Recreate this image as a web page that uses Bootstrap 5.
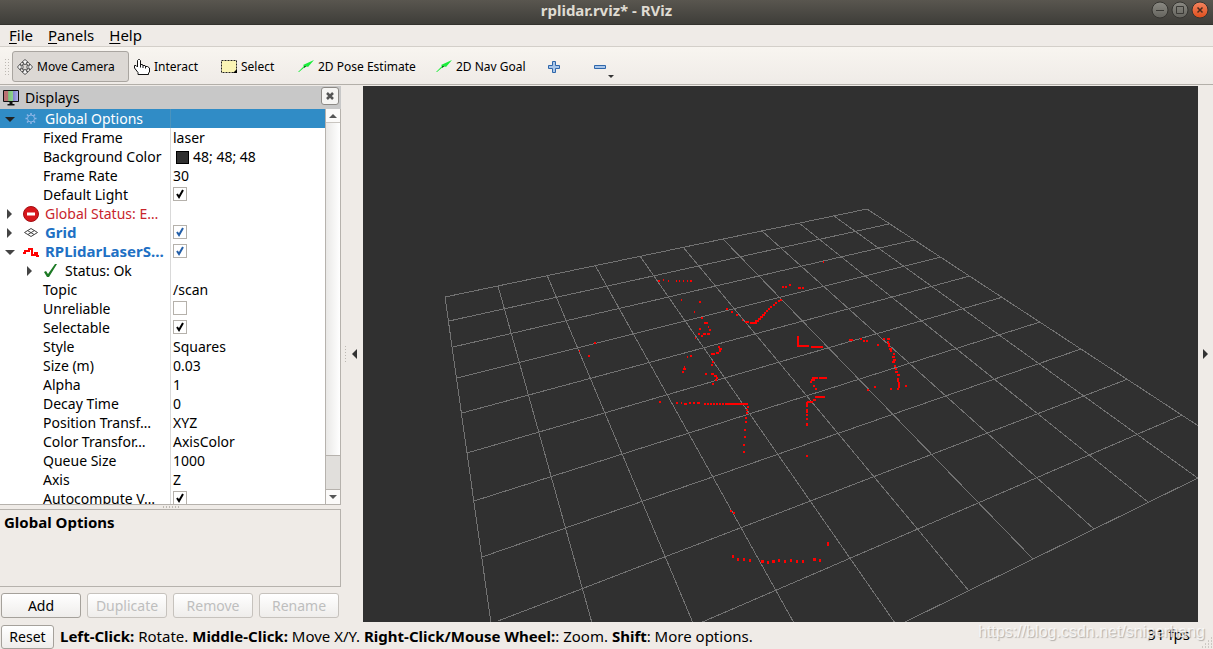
<!DOCTYPE html>
<html lang="en">
<head>
<meta charset="utf-8">
<meta name="viewport" content="width=device-width, initial-scale=1">
<title>rplidar.rviz* - RViz</title>
<link href="https://cdn.jsdelivr.net/npm/bootstrap@5.3.0/dist/css/bootstrap.min.css" rel="stylesheet">
<style>
  body { font: 14px/19px "Noto Sans", "Open Sans", sans-serif; color: #000; background: #efebe7; }
  button, input { font: inherit; color: inherit; }
  svg { display: block; flex: none; }

  .titlebar { height: 25px; background: linear-gradient(#59564f, #3e3d39); border-bottom: 1px solid #33322e; color: #dfdbd2; display: grid; grid-template-columns: 1fr auto 1fr; align-items: center; }
  .titlebar h1 { font-size: 15px; line-height: 20px; font-weight: 700; grid-column: 2; margin-bottom: 4px; }
  .win-btns { gap: 2px; justify-self: end; padding-right: 4px; margin-bottom: 4px; }
  .win-btns button { border: 0; padding: 0; background: none; }

  .menubar { height: 22px; padding-left: 9px; gap: 15px; border-bottom: 1px solid #d3cfc9; font-size: 15px; }
  .menubar a { color: #000; text-decoration: none; line-height: 21px; }
  .menubar u { text-underline-offset: 2px; text-decoration-thickness: 1px; }

  .toolbar { height: 38px; background: linear-gradient(#f8f5f0, #efebe7); border-bottom: 1px solid #b3afa9; font-size: 12px; padding: 4px 0 2px 4px; }
  .grip-v { width: 5px; height: 17px; margin-right: 3px; background: radial-gradient(circle, #bdb9b3 1px, transparent 1px) 0 0 / 3px 3px; }
  .tool { border: 1px solid transparent; border-radius: 3px; background: none; height: 31px; padding: 0 4px; gap: 4px; text-align: left; white-space: nowrap; }
  .tool.active { background: #dcd8d4; border-color: #a9a5a0; }
  .w-move { width: 117px; } .w-interact { width: 87px; } .w-select { width: 77px; }
  .w-pose { width: 138px; } .w-nav { width: 112px; } .w-plus { width: 46px; }
  .tool-split { gap: 0; }
  .minus-menu { margin: 20px 0 0 2px; }

  .dock { width: 341px; margin-top: 1px; }
  .dock-title { height: 23px; background: #c8c8c8; padding: 0 2px 0 3px; gap: 6px; }
  .dock-title h2 { font-size: 14px; line-height: 19px; font-weight: 400; }
  .dock-close { width: 18px; height: 18px; padding: 0; border: 1px solid #8d8a86; border-radius: 3px; background: #f6f5f3; margin-bottom: 3px; display: grid; place-items: center; }

  .tree-box { min-height: 0; background: #fff; border-bottom: 1px solid #b6b2ad; border-right: 1px solid #b6b2ad; }
  .tree-view { overflow: hidden; min-height: 0; }
  .props { width: 100%; table-layout: fixed; border-collapse: separate; border-spacing: 0; }
  .props td { height: 19px; line-height: 19px; padding: 0; white-space: nowrap; }
  .props td:first-child { width: 171px; border-right: 1px solid #d9d9d9; padding: 0 0 0 43px; }
  .props td:last-child { padding-left: 2px; }
  .props td.branch { padding-left: 4px; }
  .props .picked td { background: #308cc6; color: #fff; border-color: #4a93bd; }
  .node { display: flex; align-items: center; height: 19px; }
  .node.inner { padding-left: 20px; }
  .node svg:first-child { margin-right: 8px; }
  .node svg:nth-child(2) { margin-right: 5px; }
  .err { color: #c8252c; }
  .disp { color: #2070c4; font-weight: 700; font-size: 15px; }
  .tick { appearance: none; display: block; width: 14px; height: 14px; margin: 0 0 1px; border: 1px solid #b5b1ab; background: #fff; }
  .tick:checked { background: #fff url("data:image/svg+xml,%3Csvg xmlns='http://www.w3.org/2000/svg' viewBox='0 0 12 12'%3E%3Cpath d='M3 6l2 3 4-7' fill='none' stroke='%23000' stroke-width='2'/%3E%3C/svg%3E"); }
  .tick.blue:checked { background-image: url("data:image/svg+xml,%3Csvg xmlns='http://www.w3.org/2000/svg' viewBox='0 0 12 12'%3E%3Cpath d='M3 6l2 3 4-7' fill='none' stroke='%23245fa8' stroke-width='2'/%3E%3C/svg%3E"); }
  .swatch { display: inline-block; width: 13px; height: 13px; background: #303030; border: 1px solid #000; margin: 0 4px 0 3px; vertical-align: -2px; }

  .scroll { width: 15px; border-left: 1px solid #b6b2ad; background: linear-gradient(90deg, #e9e8e6, #fff); }
  .scroll button { height: 14px; padding: 0; border: 0; background: #fbfaf9; display: grid; place-items: center; }
  .scroll .up { border-bottom: 1px solid #c9c5c0; }
  .thumb { height: 35px; background: #e1dfdc; border: solid #b6b2ad; border-width: 1px 0; }

  .grip-h { height: 4px; width: 17px; background: radial-gradient(circle, #bdb9b3 1px, transparent 1px) 0 0 / 3px 4px; }
  .help { height: 78px; border: 1px solid #b6b2ad; border-left: 0; padding: 3px 4px; font-weight: 700; font-size: 15px; }
  .dock-btns { gap: 6px; padding: 6px 2px 4px 1px; }
  .push { height: 25px; border: 1px solid #a5a19b; border-radius: 3px; background: linear-gradient(#fff, #efedeb); padding: 0; }
  .push:disabled { color: #bebebe; border-color: #c6c2bd; }

  .side-l { width: 22px; padding: 0 6px 0 3px; }
  .side-r { width: 15px; }
  .side-l button, .side-r button { border: 0; background: none; padding: 0; }
  .grip-s { width: 2px; height: 17px; background: radial-gradient(circle, #bdb9b3 1px, transparent 1px) 0 0 / 3px 3px; }
  .view3d { background: #303030; min-width: 0; margin-top: 1px; }

  .status { height: 27px; padding: 2px 2px 0 1px; position: relative; font-size: 15px; }
  .status .push { width: 53px; height: 24px; font-size: 14px; }
  .status p { padding-left: 6px; white-space: nowrap; }
  .fps { margin-right: 21px; padding-bottom: 4px; }
  .watermark { position: absolute; right: 8px; top: 0; font: 16px/19px "Liberation Sans", sans-serif; color: rgba(255,255,255,.75); text-shadow: 1px 1px 1px rgba(120,116,110,.5); }
  .resizer { position: absolute; right: 0; bottom: 0; }
</style>
</head>
<body class="vh-100 d-flex flex-column overflow-hidden">

<header class="titlebar flex-shrink-0">
  <h1>rplidar.rviz* - RViz</h1>
  <div class="win-btns d-flex">
    <button aria-label="Minimize"><svg width="18" height="18"><defs><linearGradient id="g" x2="0" y2="1"><stop stop-color="#8b8a83"/><stop offset="1" stop-color="#64635d"/></linearGradient><linearGradient id="o" x2="0" y2="1"><stop stop-color="#f58560"/><stop offset="1" stop-color="#de4e1c"/></linearGradient></defs><circle cx="9" cy="9" r="8" fill="url(#g)" stroke="#353430"/><path d="M5 9.500h8" stroke="#3a3935"/></svg></button>
    <button aria-label="Maximize"><svg width="18" height="18"><circle cx="9" cy="9" r="8" fill="url(#g)" stroke="#353430"/><path d="M5.500 5.500h7v7h-7z" fill="none" stroke="#3a3935"/></svg></button>
    <button aria-label="Close"><svg width="18" height="18"><circle cx="9" cy="9" r="8" fill="url(#o)" stroke="#353430"/><path d="M6.500 6.500l5 5m0-5l-5 5" stroke="#4a2a1c" stroke-width="1.500"/></svg></button>
  </div>
</header>

<nav class="menubar d-flex flex-shrink-0">
  <a href="#"><u>F</u>ile</a><a href="#"><u>P</u>anels</a><a href="#"><u>H</u>elp</a>
</nav>

<div class="toolbar d-flex align-items-center flex-shrink-0" role="toolbar">
  <div class="grip-v"></div>
  <button class="tool active w-move d-flex align-items-center">
    <svg width="16" height="16" fill="#f4f4f4" stroke="#555"><path d="M8 .5l3.500 3H9.500v2h-3v-2h-2zM8 15.500l-3.500-3h2v-2h3v2h2zM.5 8l3-3.500v2H6v3H3.500v2zM15.500 8l-3-3.500v2H10v3h2.500v2z"/><ellipse cx="8" cy="8" rx="4" ry="3" fill="none" stroke="#777"/></svg>Move Camera</button>
  <button class="tool w-interact d-flex align-items-center">
    <svg width="16" height="16" fill="#fff" stroke="#111"><path d="M4 15.500v-2L.5 9V6.500h1.500L3.500 8V1.500l1-1h1l1 1V5.500h2l.5 1h2l.5 1h2l2 1.500V13l-1 1v1.500z"/><path d="M6.500 5v3.500M9 6v3M11.500 7v2.500" fill="none"/></svg>Interact</button>
  <button class="tool w-select d-flex align-items-center">
    <svg width="16" height="16"><path d="M.5 1.500h15v12H.5z" fill="#fbf5b5" stroke="#222" stroke-dasharray="2 1"/><path d="M16 10v4h-4z"/></svg>Select</button>
  <button class="tool w-pose d-flex align-items-center">
    <svg width="16" height="16"><path d="M0 13l6-6-1-1L16 1l-6 7-2-1-7 6z" fill="#1bed3b"/><path d="M6 7l3 0-3 2z" fill="#0a6e1b"/></svg>2D Pose Estimate</button>
  <button class="tool w-nav d-flex align-items-center">
    <svg width="16" height="16"><path d="M0 13l6-6-1-1L16 1l-6 7-2-1-7 6z" fill="#1bed3b"/><path d="M6 7l3 0-3 2z" fill="#0a6e1b"/></svg>2D Nav Goal</button>
  <button class="tool w-plus d-flex align-items-center" aria-label="Add tool">
    <svg width="12" height="12"><path d="M4.500.5h3v4h4v3h-4v4h-3v-4h-4v-3h4z" fill="#a8c6ea" stroke="#2f67aa"/></svg></button>
  <button class="tool tool-split d-flex align-items-center" aria-label="Remove tool">
    <svg width="12" height="4"><path d="M.5.5h11v3H.5z" fill="#a8c6ea" stroke="#2f67aa"/></svg>
    <svg class="minus-menu" width="6" height="3"><path d="M0 0h6L3 3z" fill="#333"/></svg></button>
</div>

<main class="d-flex flex-grow-1" style="min-height:0">
  <section class="dock d-flex flex-column flex-shrink-0">
    <div class="dock-title d-flex align-items-center flex-shrink-0">
      <svg width="16" height="16"><defs><linearGradient id="m"><stop offset=".3" stop-color="#b97272"/><stop offset=".34" stop-color="#7cc47c"/><stop offset=".62" stop-color="#8fd08f"/><stop offset=".66" stop-color="#8383cf"/><stop offset="1" stop-color="#b5b5ee"/></linearGradient></defs><path d="M.5.500h15v11H.5z" fill="url(#m)" stroke="#111"/><path d="M6.500 12h3v2h2v1.500h-7V14h2z" fill="#111"/></svg>
      <h2 class="m-0 flex-grow-1">Displays</h2>
      <button class="dock-close" aria-label="Close panel"><svg width="8" height="8"><path d="M1 1l6 6m0-6L1 7" stroke="#555" stroke-width="2.500"/></svg></button>
    </div>
    <div class="tree-box d-flex flex-grow-1">
      <div class="tree-view flex-grow-1">
      <table class="props">
        <tr class="picked"><td class="branch"><div class="node"><svg width="11" height="16"><path d="M1 6h10L6 11z" fill="#222"/></svg><svg width="17" height="16" fill="none" stroke="#8db5e6"><circle cx="8" cy="7.500" r="3.500"/><path d="M8 2v2M8 11v2M2.500 7.500h2M11.500 7.500h2M4 3.500l1.500 1.500M10.500 10l1.500 1.500M12 3.500L10.500 5M5.500 10L4 11.500" stroke-width="1.500"/></svg><span>Global Options</span></div></td><td></td></tr>
        <tr><td>Fixed Frame</td><td>laser</td></tr>
        <tr><td>Background Color</td><td><i class="swatch"></i>48; 48; 48</td></tr>
        <tr><td>Frame Rate</td><td>30</td></tr>
        <tr><td><label for="c1">Default Light</label></td><td><input class="tick" type="checkbox" id="c1" checked></td></tr>
        <tr><td class="branch"><div class="node"><svg width="11" height="16"><path d="M3 3v10l5-5z" fill="#444"/></svg><svg width="17" height="16"><circle cx="8" cy="8" r="7.500" fill="#d8161b" stroke="#a30e12"/><path d="M4 6.500h8v3H4z" fill="#fff"/></svg><span class="err">Global Status: E…</span></div></td><td></td></tr>
        <tr><td class="branch"><div class="node"><svg width="11" height="16"><path d="M3 3v10l5-5z" fill="#444"/></svg><svg width="17" height="16" fill="none" stroke="#444"><path d="M1.500 7.500l6.500-4 6.500 4-6.500 4zM4.500 5.500l6.500 4M11.500 5.500l-6.500 4"/></svg><label for="c2" class="disp">Grid</label></div></td><td><input class="tick blue" type="checkbox" id="c2" checked></td></tr>
        <tr><td class="branch"><div class="node"><svg width="11" height="16"><path d="M1 6h10L6 11z" fill="#444"/></svg><svg width="17" height="16"><path d="M0 9h2V7h4V5h3v6h3V9h2v3h2" fill="none" stroke="#f00" stroke-width="2"/></svg><label for="c5" class="disp">RPLidarLaserS…</label></div></td><td><input class="tick blue" type="checkbox" id="c5" checked></td></tr>
        <tr><td class="branch"><div class="node inner"><svg width="11" height="16"><path d="M3 3v10l5-5z" fill="#444"/></svg><svg width="17" height="16"><path d="M1 9l2-1 2 3 7-10 2 0L6 14H4z" fill="#1d7a25"/></svg><span>Status: Ok</span></div></td><td></td></tr>
        <tr><td>Topic</td><td>/scan</td></tr>
        <tr><td><label for="c3">Unreliable</label></td><td><input class="tick" type="checkbox" id="c3"></td></tr>
        <tr><td><label for="c4">Selectable</label></td><td><input class="tick" type="checkbox" id="c4" checked></td></tr>
        <tr><td>Style</td><td>Squares</td></tr>
        <tr><td>Size (m)</td><td>0.03</td></tr>
        <tr><td>Alpha</td><td>1</td></tr>
        <tr><td>Decay Time</td><td>0</td></tr>
        <tr><td>Position Transf…</td><td>XYZ</td></tr>
        <tr><td>Color Transfor…</td><td>AxisColor</td></tr>
        <tr><td>Queue Size</td><td>1000</td></tr>
        <tr><td>Axis</td><td>Z</td></tr>
        <tr><td><label for="c6">Autocompute V…</label></td><td><input class="tick" type="checkbox" id="c6" checked></td></tr>
      </table>
      </div>
      <div class="scroll d-flex flex-column flex-shrink-0">
        <button class="up" aria-label="Scroll up"><svg width="8" height="4"><path d="M0 4h8L4 0z" fill="#555"/></svg></button>
        <div class="flex-grow-1"></div>
        <div class="thumb"></div>
        <button aria-label="Scroll down"><svg width="8" height="4"><path d="M0 0h8L4 4z" fill="#555"/></svg></button>
      </div>
    </div>
    <div class="grip-h mx-auto flex-shrink-0"></div>
    <div class="help flex-shrink-0">Global Options</div>
    <div class="dock-btns d-flex flex-shrink-0">
      <button class="push flex-fill w-25">Add</button>
      <button class="push flex-fill w-25" disabled>Duplicate</button>
      <button class="push flex-fill w-25" disabled>Remove</button>
      <button class="push flex-fill w-25" disabled>Rename</button>
    </div>
  </section>

  <div class="side-l d-flex align-items-center justify-content-between flex-shrink-0">
    <div class="grip-s"></div>
    <button aria-label="Hide left panel"><svg width="5" height="10"><path d="M5 0v10L0 5z" fill="#333"/></svg></button>
  </div>

  <section class="view3d flex-grow-1">
    <svg class="w-100 h-100" viewBox="363 86 835 536" preserveAspectRatio="xMidYMid slice" shape-rendering="crispEdges" fill="none">
      <g stroke="#727272">
        <path d="M445 297L867 209M449 321L889 224M453 347L914 240M457 378L941 257M462 413L970 276M467 453L1003 297M474 501L1040 322M482 557L1081 349M498 621L1128 379M700 623L1182 415M903 623L1200 477"/>
        <path d="M445 297L491 623M498 286L592 623M547 275L693 623M595 265L794 623M640 256L895 623M683 247L969 591M723 239L1033 559M762 231L1094 529M799 223L1148 502M834 216L1199 479M867 209L1200 427"/>
      </g>
      <g stroke="#f00" stroke-width="2">
        <path d="M745 322h4M750 323h7M755 321h4M758 319h3M760 317h3M762 315h3M764 313h2M766 311h2M768 309h2M770 307h2M773 305h2M775 303h2M778 301h2M780 300h2"/>
        <path d="M718 347h2M719 349h3M719 351h2M716 353h3M711 354h4M684 367h1M683 369h3M682 372h2M711 374h3M714 376h3M716 378h2M715 380h2M725 404h23M798 336v10h11M811 347h12M812 378h6M819 378h8M811 380h4M810 382h2M825 397h-10M813 400h3M807 402h6"/>
        <path d="M888 344h2M888 346h2M889 349h3M890 351h2M893 354h2M892 357h3M893 360h3M892 362h3M894 366h2M895 369h2M895 372h3M897 375h3M898 378v4M899 382v4M898 387h2"/>
        <path d="M676 403h2M681 403h1M684 404h3M689 403h2M693 403h2M697 403h3M704 404h2M707 404h2M710 404h2M713 404h2M716 404h2M719 404h2M722 404h2M807 402v5M807 409v4M807 414v2M807 418v2M807 423v3"/>
        <path d="M658 281h2M663 280h1M668 281h1M676 281h1M679 281h1M683 281h1M687 281h1M690 281h2M681 300h1M699 302h2M694 312h1M701 318h2M704 323h4M699 329h2M708 327h1M709 330h2M698 334h2M703 334h3M707 334h3M701 336h2M695 338h1M726 309h2M731 312h2M736 315h2M742 320h1M782 287h2M785 287h2M789 285h2M798 288h3M802 288h2M823 262h1"/>
        <path d="M594 343h2M579 351h1M588 356h2M687 357h1M690 356h2M712 362h2M711 365h2M705 374h2M712 384h2M659 402h2M747 407h2M746 410h2M746 413h2M745 418h2M745 422h2M744 430h2M744 437h2M743 445h2M743 452h2"/>
        <path d="M806 456h2M813 386h2M815 389h2M849 340h4M860 339h2M863 341h2M866 341h2M877 345h2M883 339h2M887 339h3M887 342h2M897 389h2M890 389h2M905 386h2M874 387h2M867 390h2M730 511h2M733 513h2M827 543h2"/>
      </g>
      <g stroke="#f00" stroke-width="3">
        <path d="M732 556h2M737 559h2M743 559h2M749 560h2M761 561h3M767 562h2M772 561h3M778 560h2M784 561h2M790 560h2M796 561h2M802 561h2M813 559h3M819 560h2M827 544h2"/>
      </g>
    </svg>
  </section>
  <div class="side-r d-flex align-items-center justify-content-center flex-shrink-0">
    <button aria-label="Show right panel"><svg width="5" height="10"><path d="M0 0v10l5-5z" fill="#333"/></svg></button>
  </div>
</main>

<footer class="status d-flex align-items-center flex-shrink-0">
  <button class="push">Reset</button>
  <p class="m-0 flex-grow-1"><b>Left-Click:</b> Rotate. <b>Middle-Click:</b> Move X/Y. <b>Right-Click/Mouse Wheel:</b>: Zoom. <b>Shift</b>: More options.</p>
  <span class="fps">31 fps</span>
  <span class="watermark">https://blog.csdn.net/sniperhang</span>
  <svg class="resizer" width="12" height="12"><path d="M10 1h1M7 4h1M10 4h1M4 7h1M7 7h1M10 7h1M1 10h1M4 10h1M7 10h1M10 10h1" stroke="#aaa6a0"/></svg>
</footer>
<script src="https://cdn.jsdelivr.net/npm/bootstrap@5.3.0/dist/js/bootstrap.bundle.min.js"></script>
</body>
</html>
